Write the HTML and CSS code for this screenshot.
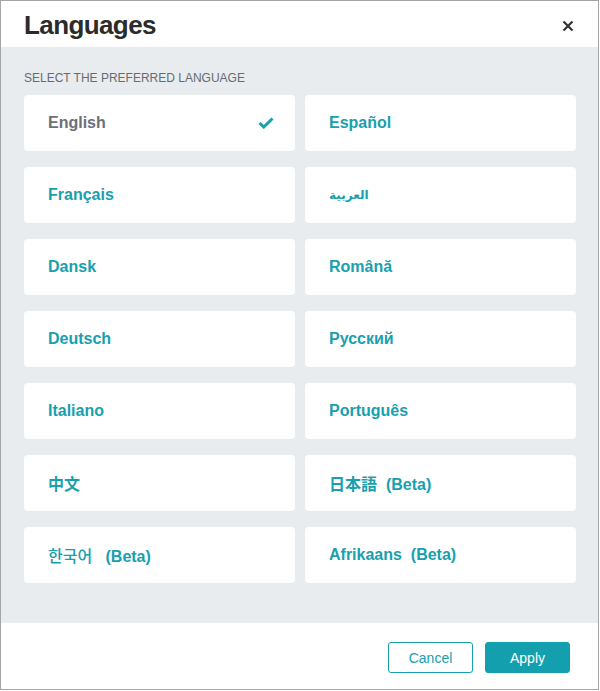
FILE: index.html
```html
<!DOCTYPE html>
<html lang="en">
<head>
<meta charset="utf-8">
<title>Languages</title>
<link rel="stylesheet" href="styles.css">
</head>
<body>
<div class="modal">
  <header class="modal-header">
    <h1 class="title">Languages</h1>
    <button class="close" aria-label="Close">
      <svg width="12" height="12" viewBox="0 0 12 12"><path d="M1.5 1.5 L10.5 10.5 M10.5 1.5 L1.5 10.5" stroke="#333" stroke-width="2.2" fill="none"/></svg>
    </button>
  </header>
  <main class="modal-body">
    <div class="label">SELECT THE PREFERRED LANGUAGE</div>
    <div class="grid">
      <div class="card selected"><span>English</span>
        <svg class="check" width="16" height="12" viewBox="0 0 16 12"><path d="M1.5 6 L5.8 10 L14.5 1.5" stroke="#17a0ae" stroke-width="3" fill="none"/></svg>
      </div>
      <div class="card"><span>Español</span></div>
      <div class="card"><span>Français</span></div>
      <div class="card"><span class="arabic" lang="ar">العربية</span></div>
      <div class="card"><span>Dansk</span></div>
      <div class="card"><span>Română</span></div>
      <div class="card"><span>Deutsch</span></div>
      <div class="card"><span>Русский</span></div>
      <div class="card"><span>Italiano</span></div>
      <div class="card"><span>Português</span></div>
      <div class="card"><span lang="zh">中文</span></div>
      <div class="card"><span><span lang="ja">日本語</span>&nbsp; (Beta)</span></div>
      <div class="card"><span><span class="korean" lang="ko">한국어</span>&nbsp;&nbsp; (Beta)</span></div>
      <div class="card"><span>Afrikaans&nbsp; (Beta)</span></div>
    </div>
  </main>
  <footer class="modal-footer">
    <button class="btn btn-outline">Cancel</button>
    <button class="btn btn-primary">Apply</button>
  </footer>
</div>
</body>
</html>
```
FILE: styles.css
```css
html, body {
  margin: 0;
  padding: 0;
  background: #ffffff;
}
body {
  font-family: "Liberation Sans", Arial, "Noto Sans CJK SC", sans-serif;
}
.modal {
  box-sizing: border-box;
  width: 599px;
  height: 690px;
  border: 1px solid #a4a4a4;
  display: flex;
  flex-direction: column;
  background: #ffffff;
}
.modal-header {
  box-sizing: border-box;
  height: 46px;
  display: flex;
  align-items: flex-start;
  justify-content: space-between;
  padding: 0 24px 0 23px;
  background: #ffffff;
}
.title {
  margin: 11px 0 0 0;
  font-size: 26px;
  letter-spacing: -0.6px;
  font-weight: 700;
  color: #2b2b2b;
  line-height: 1;
}
.close {
  border: 0;
  background: none;
  padding: 0;
  margin-top: 19px;
  width: 12px;
  height: 12px;
  display: flex;
  cursor: pointer;
}
.modal-body {
  background: #e9ecee;
  height: 576px;
  box-sizing: border-box;
  padding: 24px 0 40px 23px;
}
.label {
  font-size: 12px;
  line-height: 14px;
  color: #676b70;
  margin-bottom: 10px;
}
.grid {
  display: grid;
  grid-template-columns: 271px 271px;
  grid-auto-rows: 56px;
  column-gap: 10px;
  row-gap: 16px;
}
.card {
  background: #ffffff;
  border-radius: 4px;
  display: flex;
  align-items: center;
  justify-content: space-between;
  padding: 0 21px 0 24px;
  font-size: 16px;
  font-weight: 700;
  color: #18a0ae;
}
.card.selected {
  color: #6b7079;
}
.check {
  display: block;
}
.arabic {
  font-family: "DejaVu Sans", sans-serif;
  font-weight: 700;
  font-size: 12px;
}
.korean {
  font-family: "Noto Sans CJK KR", sans-serif;
  font-weight: 500;
}
.modal-footer {
  flex: 1;
  display: flex;
  justify-content: flex-end;
  align-items: flex-start;
  gap: 12px;
  padding: 19px 28px 0 0;
  background: #ffffff;
}
.btn {
  box-sizing: border-box;
  width: 85px;
  height: 31px;
  border-radius: 3px;
  font-family: "Liberation Sans", Arial, sans-serif;
  font-size: 14px;
  cursor: pointer;
}
.btn-outline {
  background: #ffffff;
  border: 1px solid #18a0ae;
  color: #18a0ae;
}
.btn-primary {
  background: #139fad;
  border: 1px solid #139fad;
  color: #ffffff;
}
```
